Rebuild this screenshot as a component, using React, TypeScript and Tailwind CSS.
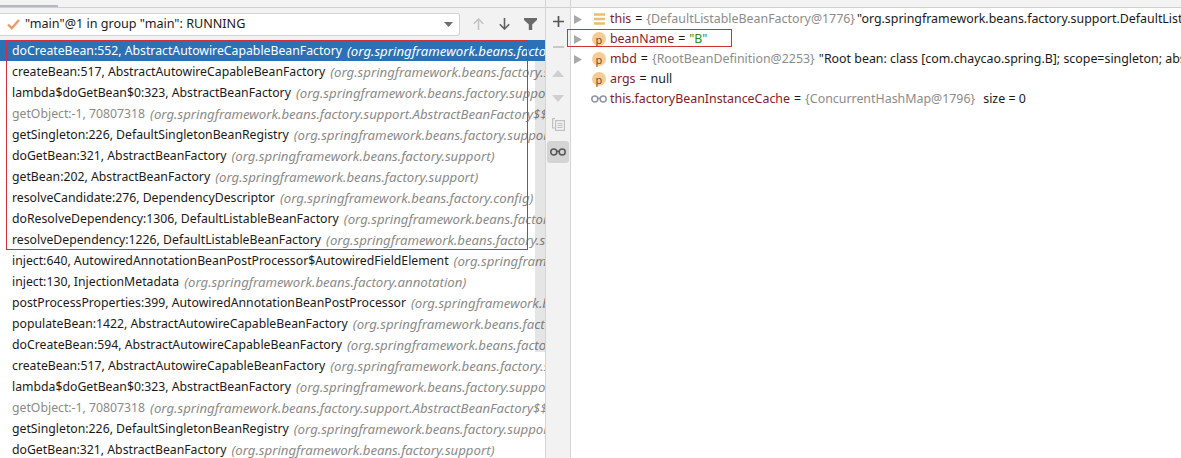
interface Frame {
  method: string
  pkg: string
  dim?: boolean
}

const frames: Frame[] = [
  { method: 'doCreateBean:552, AbstractAutowireCapableBeanFactory', pkg: '(org.springframework.beans.factory.support)' },
  { method: 'createBean:517, AbstractAutowireCapableBeanFactory', pkg: '(org.springframework.beans.factory.support)' },
  { method: 'lambda$doGetBean$0:323, AbstractBeanFactory', pkg: '(org.springframework.beans.factory.support)' },
  { method: 'getObject:-1, 70807318', pkg: '(org.springframework.beans.factory.support.AbstractBeanFactory$$Lambda)', dim: true },
  { method: 'getSingleton:226, DefaultSingletonBeanRegistry', pkg: '(org.springframework.beans.factory.support)' },
  { method: 'doGetBean:321, AbstractBeanFactory', pkg: '(org.springframework.beans.factory.support)' },
  { method: 'getBean:202, AbstractBeanFactory', pkg: '(org.springframework.beans.factory.support)' },
  { method: 'resolveCandidate:276, DependencyDescriptor', pkg: '(org.springframework.beans.factory.config)' },
  { method: 'doResolveDependency:1306, DefaultListableBeanFactory', pkg: '(org.springframework.beans.factory.support)' },
  { method: 'resolveDependency:1226, DefaultListableBeanFactory', pkg: '(org.springframework.beans.factory.support)' },
  { method: 'inject:640, AutowiredAnnotationBeanPostProcessor$AutowiredFieldElement', pkg: '(org.springframework.beans.factory.annotation)' },
  { method: 'inject:130, InjectionMetadata', pkg: '(org.springframework.beans.factory.annotation)' },
  { method: 'postProcessProperties:399, AutowiredAnnotationBeanPostProcessor', pkg: '(org.springframework.beans.factory.annotation)' },
  { method: 'populateBean:1422, AbstractAutowireCapableBeanFactory', pkg: '(org.springframework.beans.factory.support)' },
  { method: 'doCreateBean:594, AbstractAutowireCapableBeanFactory', pkg: '(org.springframework.beans.factory.support)' },
  { method: 'createBean:517, AbstractAutowireCapableBeanFactory', pkg: '(org.springframework.beans.factory.support)' },
  { method: 'lambda$doGetBean$0:323, AbstractBeanFactory', pkg: '(org.springframework.beans.factory.support)' },
  { method: 'getObject:-1, 70807318', pkg: '(org.springframework.beans.factory.support.AbstractBeanFactory$$Lambda)', dim: true },
  { method: 'getSingleton:226, DefaultSingletonBeanRegistry', pkg: '(org.springframework.beans.factory.support)' },
  { method: 'doGetBean:321, AbstractBeanFactory', pkg: '(org.springframework.beans.factory.support)' },
]

function Expander() {
  return (
    <svg width="8" height="9" viewBox="0 0 8 9" className="shrink-0">
      <path d="M0 0L8 4.5L0 9Z" fill="#a9a9a9" />
    </svg>
  )
}

function ParamIcon() {
  return (
    <span className="flex h-[14px] w-[14px] shrink-0 items-center justify-center rounded-full bg-[#f6cc96] text-[11px] leading-none text-[#6e5230]">
      p
    </span>
  )
}

function Glasses({ color, width }: { color: string; width: number }) {
  return (
    <svg width={width} height={width / 2} viewBox="0 0 16 8" fill="none" stroke={color} strokeWidth="1.5">
      <circle cx="3.8" cy="4" r="3" />
      <circle cx="12.2" cy="4" r="3" />
      <path d="M6.8 3.4H9.2" />
    </svg>
  )
}

export default function App() {
  return (
    <div className="relative h-[458px] w-[1181px] overflow-hidden bg-white font-['Noto_Sans','Open_Sans',sans-serif] text-[12.4px] text-[#1a1a1a]">
      <div className="flex h-full">
        {/* Frames panel */}
        <div className="flex w-[546px] shrink-0 flex-col border-r border-[#d4d4d4]">
          <div className="h-[8px] shrink-0 border-b border-[#d0d0d0] bg-[#f3f3f3]">
            <div className="mt-[5px] h-[2px] w-[58px] bg-[#b8b8c4]" />
          </div>
          <div className="flex h-[32px] shrink-0 items-center bg-[#f2f2f2]">
            <div className="flex h-[23px] w-[460px] shrink-0 items-center rounded-r-[3px] border border-l-0 border-[#d2d2d2] bg-white pl-[7px] pr-[6px]">
              <svg width="13" height="11" viewBox="0 0 13 11" fill="none" stroke="#ee9a6c" strokeWidth="2.4" className="shrink-0">
                <path d="M1 5.5L4.8 9.2L12 1" />
              </svg>
              <span className="ml-[5px] flex-1 whitespace-nowrap text-[12.6px]">"main"@1 in group "main": RUNNING</span>
              <svg width="9" height="5" viewBox="0 0 9 5">
                <path d="M0 0H9L4.5 5Z" fill="#6e6e6e" />
              </svg>
            </div>
            <div className="ml-[13px] flex items-center">
              <svg width="11" height="12" viewBox="0 0 11 12" fill="none" stroke="#c4c4c4" strokeWidth="1.6">
                <path d="M5.5 12V1M.8 5.7L5.5 1L10.2 5.7" />
              </svg>
              <svg width="11" height="12" viewBox="0 0 11 12" fill="none" stroke="#5f5f5f" strokeWidth="1.6" className="ml-[15px]">
                <path d="M5.5 0V11M.8 6.3L5.5 11L10.2 6.3" />
              </svg>
              <svg width="13" height="12" viewBox="0 0 13 12" className="ml-[14px]">
                <path d="M0 0H13V2L8.2 6.5V12H4.8V6.5L0 2Z" fill="#6a6a6a" />
              </svg>
            </div>
          </div>
          <div className="min-h-0 flex-1 overflow-hidden text-[12.25px]">
            {frames.map((frame, i) => (
              <div
                key={i}
                className={`flex h-[21px] items-center overflow-hidden whitespace-nowrap pl-[12px] pt-[2px] ${
                  i === 0 ? 'bg-[#2a71b8] text-white' : frame.dim ? 'text-[#8a8a8a]' : ''
                }`}
              >
                <span>{frame.method}</span>
                <span className={`ml-[5px] text-[13.2px] italic ${i === 0 ? 'text-white' : 'text-[#8a8a8a]'}`}>{frame.pkg}</span>
              </div>
            ))}
          </div>
        </div>

        {/* Debugger toolbar */}
        <div className="flex w-[25px] shrink-0 flex-col items-center border-r border-[#d4d4d4] bg-[#f2f2f2]">
          <div className="h-[8px] w-full shrink-0 border-b border-[#d0d0d0]" />
          <svg width="11" height="11" viewBox="0 0 11 11" className="mt-[8px]" stroke="#555" strokeWidth="1.7">
            <path d="M0 5.5H11M5.5 0V11" />
          </svg>
          <svg width="11" height="2" viewBox="0 0 11 2" className="mt-[19px]" stroke="#c8c8c8" strokeWidth="2">
            <path d="M0 1H11" />
          </svg>
          <svg width="12" height="7" viewBox="0 0 12 7" className="mt-[22px]">
            <path d="M0 7L6 0L12 7Z" fill="#cfcfcf" />
          </svg>
          <svg width="12" height="7" viewBox="0 0 12 7" className="mt-[18px]">
            <path d="M0 0H12L6 7Z" fill="#cfcfcf" />
          </svg>
          <svg width="13" height="13" viewBox="0 0 13 13" fill="none" stroke="#c0c0c0" strokeWidth="1.2" className="mt-[16px]">
            <path d="M3 .6H.6V10H3" />
            <rect x="3.6" y="2.6" width="8.8" height="9.8" />
            <path d="M5.5 5.5H10.5M5.5 7.5H10.5M5.5 9.5H10.5" />
          </svg>
          <div className="mt-[10px] flex h-[22px] w-[22px] items-center justify-center rounded-[3px] bg-[#d4d4d4]">
            <Glasses color="#555" width={16} />
          </div>
        </div>

        {/* Variables tree */}
        <div className="min-w-0 flex-1 overflow-hidden">
          <div className="h-[8px] border-b border-[#d0d0d0] bg-[#f3f3f3]" />
          <div className="pl-[3px] whitespace-nowrap">
            <div className="mt-[1px] flex h-[20px] items-center">
              <Expander />
              <svg width="11" height="12" viewBox="0 0 11 12" className="ml-[12px] shrink-0">
                <path d="M0 1.5H11M0 6H11M0 10.5H11" stroke="#e8bf70" strokeWidth="2.6" />
              </svg>
              <span className="ml-[5px] text-[#7f1d2a]">this</span>
              <span className="mx-[4px]">=</span>
              <span className="text-[#8c8c8c]">{'{DefaultListableBeanFactory@1776}'}</span>
              <span className="ml-[2px]">"org.springframework.beans.factory.support.DefaultListableBeanFactory"</span>
            </div>
            <div className="flex h-[20px] items-center">
              <Expander />
              <span className="ml-[10px]"><ParamIcon /></span>
              <span className="ml-[4px] text-[#7f1d2a]">beanName</span>
              <span className="mx-[4px]">=</span>
              <span className="text-[#2e8b2e]">"B"</span>
            </div>
            <div className="flex h-[20px] items-center">
              <Expander />
              <span className="ml-[10px]"><ParamIcon /></span>
              <span className="ml-[4px] text-[#7f1d2a]">mbd</span>
              <span className="mx-[4px]">=</span>
              <span className="text-[#8c8c8c]">{'{RootBeanDefinition@2253}'}</span>
              <span className="ml-[4px]">"Root bean: class [com.chaycao.spring.B]; scope=singleton; abstract=false"</span>
            </div>
            <div className="flex h-[20px] items-center pl-[18px]">
              <ParamIcon />
              <span className="ml-[4px] text-[#7f1d2a]">args</span>
              <span className="mx-[4px]">=</span>
              <span>null</span>
            </div>
            <div className="flex h-[20px] items-center pl-[17px]">
              <Glasses color="#8f96a3" width={16} />
              <span className="ml-[3px] text-[#7f1d2a]">this.factoryBeanInstanceCache</span>
              <span className="mx-[4px]">=</span>
              <span className="text-[#8c8c8c]">{'{ConcurrentHashMap@1796}'}</span>
              <span className="ml-[8px]">size = 0</span>
            </div>
          </div>
        </div>
      </div>

      {/* list scrollbar thumb, translucent over the rows */}
      <div className="absolute left-[535px] top-[61px] h-[291px] w-[10px] bg-black/10" />

      {/* red annotation boxes drawn over the screenshot */}
      <div className="absolute left-[6px] top-[40px] h-[210px] w-[522px] border border-[#d0303c]" />
      <div className="absolute left-[567px] top-[29px] h-[18px] w-[165px] border border-[#d0303c]" />
    </div>
  )
}
